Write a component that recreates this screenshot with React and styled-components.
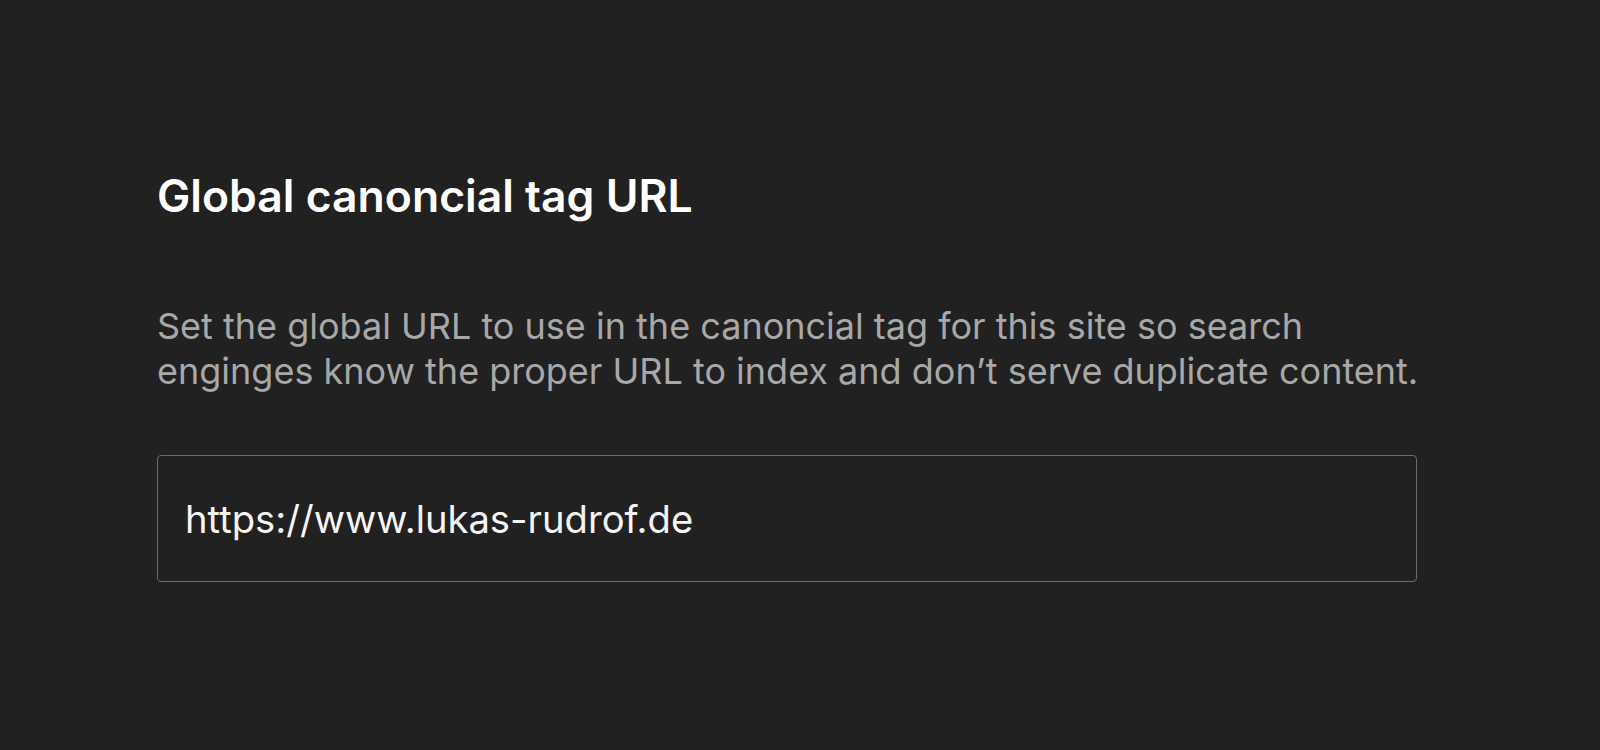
import React from 'react';
import styled, { createGlobalStyle } from 'styled-components';

const GlobalStyle = createGlobalStyle`
  html, body {
    margin: 0;
    padding: 0;
    background: #212121;
  }
  body {
    font-family: Inter, "Noto Sans", sans-serif;
    -webkit-font-smoothing: antialiased;
  }
`

const Page = styled.div`
  min-height: 750px;
  background: #212121;
  padding: 170px 0 0 157px;
  box-sizing: border-box;
`

const Section = styled.section`
  width: 1260px;
  display: flex;
  flex-direction: column;
`

const Title = styled.h2`
  margin: 0;
  font-size: 44.5px;
  font-weight: 600;
  line-height: 1.2;
  color: #ffffff;
`

const Description = styled.p`
  margin: 81px 0 0;
  font-size: 36px;
  font-weight: 400;
  line-height: 45px;
  color: #a8a8a8;
  white-space: nowrap;
`

const UrlInput = styled.input`
  margin-top: 61px;
  height: 127px;
  box-sizing: border-box;
  padding: 0 27px;
  background: #212121;
  border: 1px solid #6b6b6b;
  border-radius: 4px;
  font-family: Inter, "Noto Sans", sans-serif;
  font-size: 38.2px;
  color: #f5f5f5;
  outline: none;
`

export default function App() {
  return (
    <Page>
      <GlobalStyle />
      <Section>
        <Title>Global canoncial tag URL</Title>
        <Description>
          Set the global URL to use in the canoncial tag for this site so search
          <br />
          enginges know the proper URL to index and don’t serve duplicate content.
        </Description>
        <UrlInput type="text" defaultValue="https://www.lukas-rudrof.de" />
      </Section>
    </Page>
  );
}
